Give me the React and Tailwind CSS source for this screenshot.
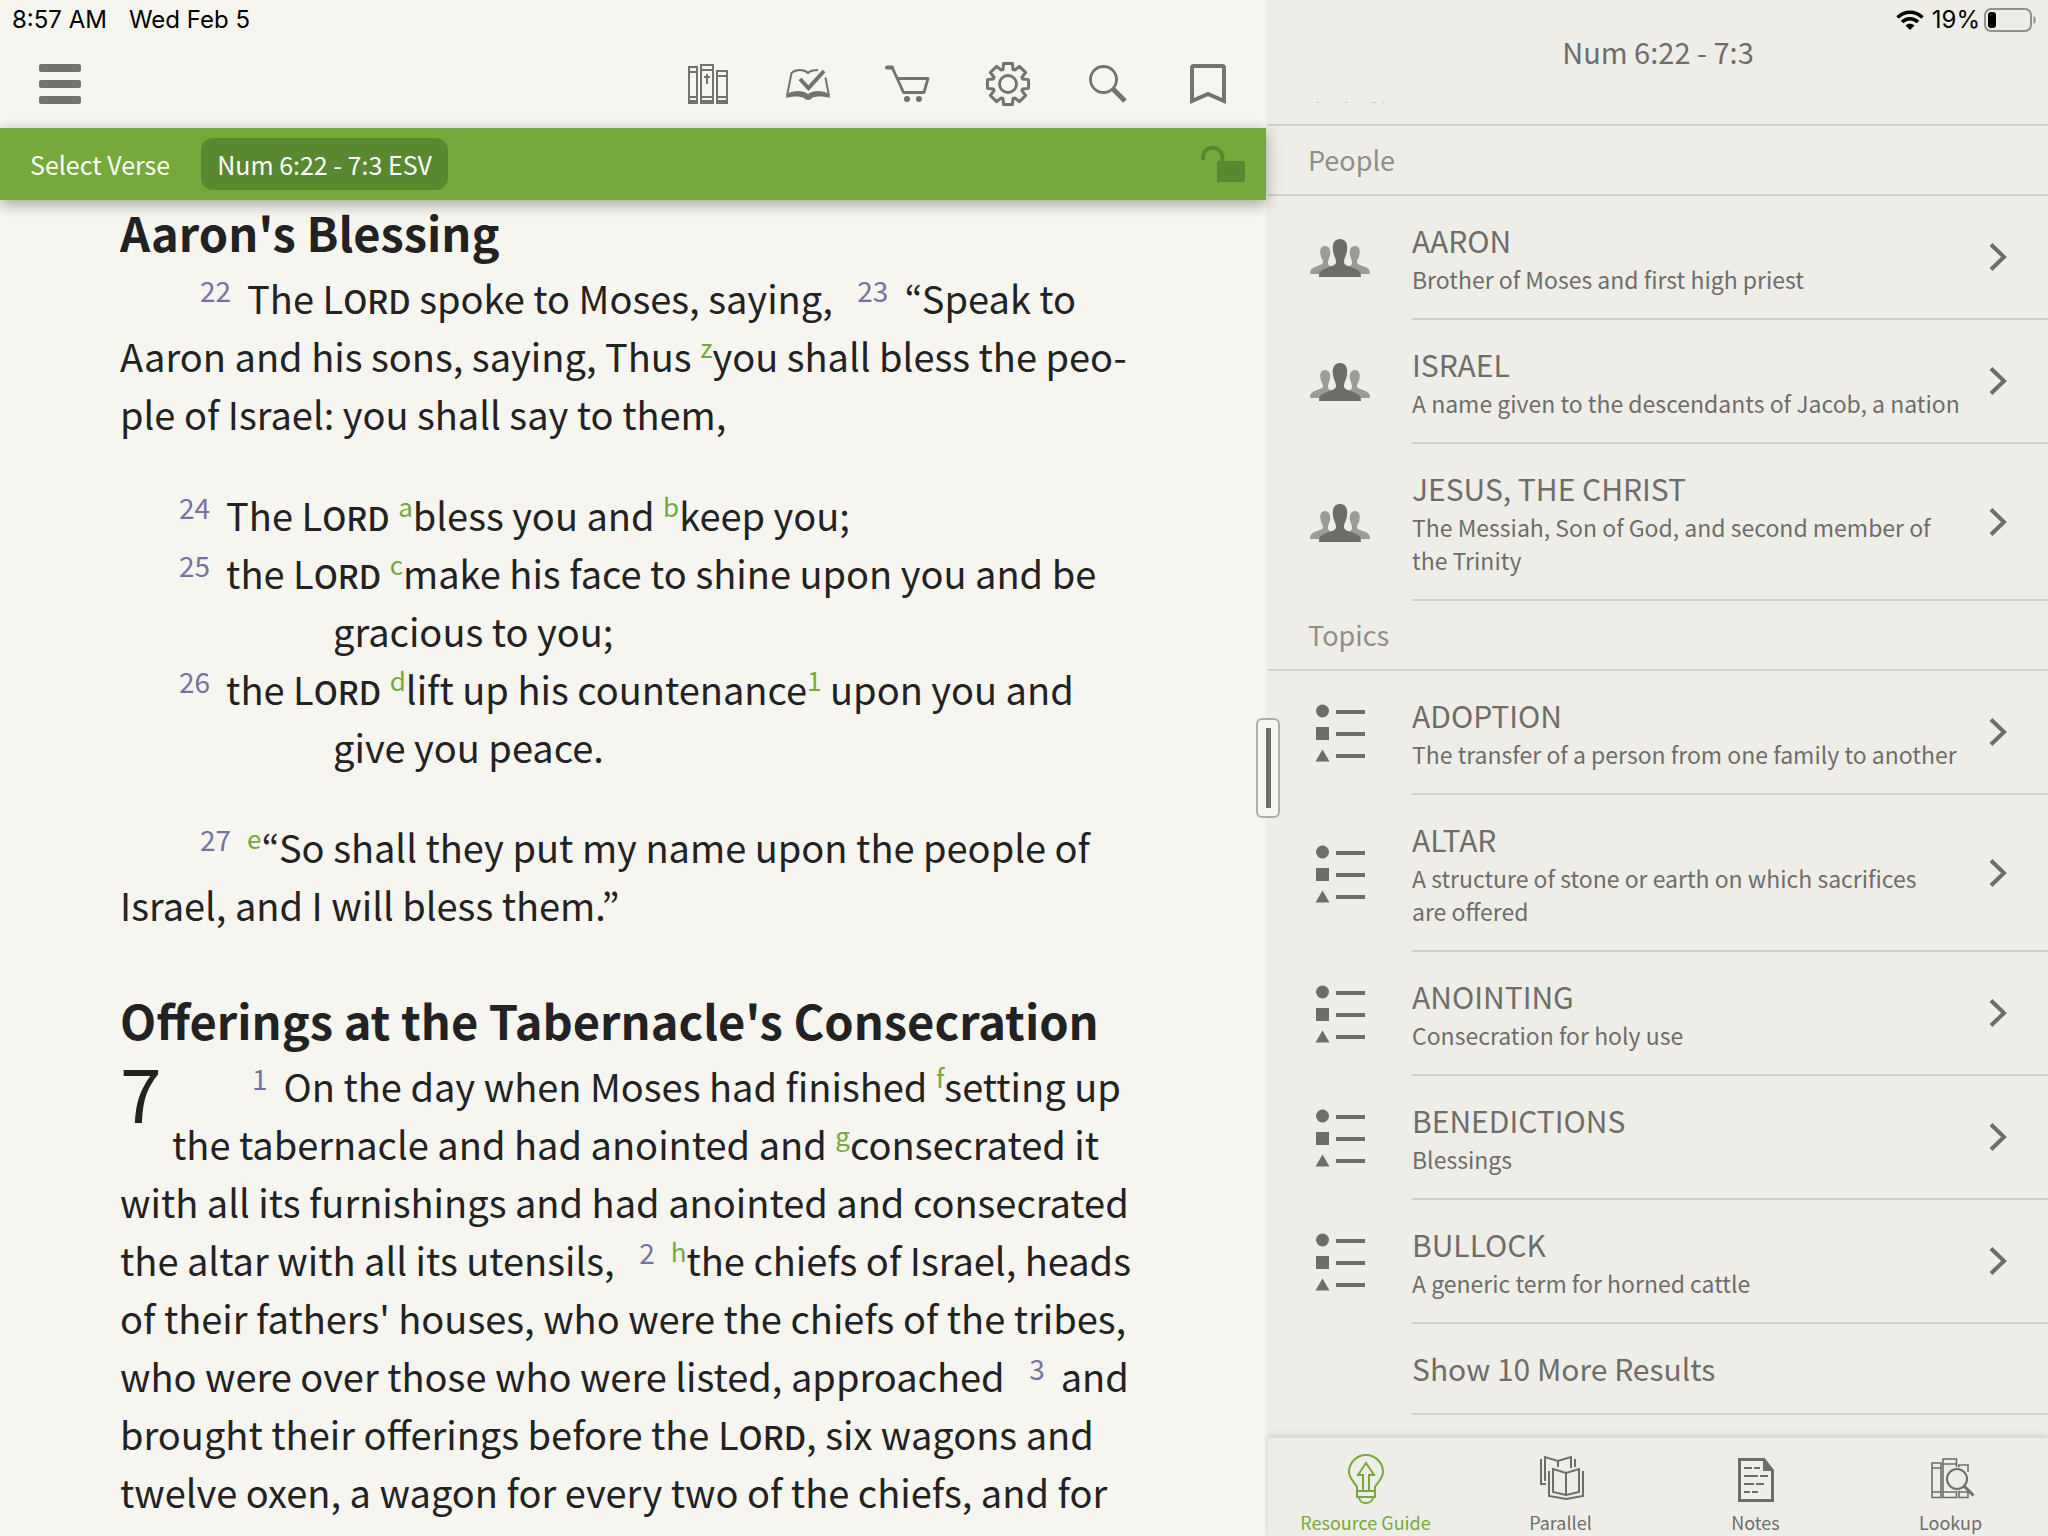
import { useState } from 'react';

const people = [
  { name: 'AARON', info: 'Brother of Moses and first high priest' },
  { name: 'ISRAEL', info: 'A name given to the descendants of Jacob, a nation' },
  { name: 'JESUS, THE CHRIST', info: 'The Messiah, Son of God, and second member of\nthe Trinity' },
];

const topics = [
  { name: 'ADOPTION', info: 'The transfer of a person from one family to another' },
  { name: 'ALTAR', info: 'A structure of stone or earth on which sacrifices\nare offered' },
  { name: 'ANOINTING', info: 'Consecration for holy use' },
  { name: 'BENEDICTIONS', info: 'Blessings' },
  { name: 'BULLOCK', info: 'A generic term for horned cattle' },
];

// Outline of the settings gear, eight teeth around (30, 30)
const gearPath = () => {
  const points = [];
  for (let i = 0; i < 8; i++) {
    [[-19, 15.5], [-12, 21], [12, 21], [19, 15.5]].forEach(([offset, r]) => {
      const a = ((i * 45 + offset) * Math.PI) / 180;
      points.push(`${(30 + r * Math.cos(a)).toFixed(2)} ${(30 + r * Math.sin(a)).toFixed(2)}`);
    });
  }
  return `M${points.join('L')}Z`;
};

function ToolIcon({ children }) {
  return (
    <svg viewBox="0 0 60 60" className="size-[60px]" fill="none" stroke="currentColor" strokeWidth="2" aria-hidden="true">
      {children}
    </svg>
  );
}

const tools = [
  {
    label: 'Library',
    icon: (
      <ToolIcon>
        <path d="M11 13h8v36h-8zM23 11h12v38H23zM39 17h10v32H39zM11 18h8M11 43h8M23 16h12M23 43h12M39 22h10M39 43h10" />
        <path d="M10 48h10M22 48h14M38 48h12" strokeWidth="4" />
        <path d="M29 20v10M26 23h6" />
      </ToolIcon>
    ),
  },
  {
    label: 'Reading plans',
    icon: (
      <ToolIcon>
        <path d="M9 42l4.5-23C18 15 26 15 30 19C33 16 36 16 40 16M47.5 23.5L51 42" />
        <path d="M8 44l1-4C15 36 25 36 30 40C35 36 45 36 51 40l1 4C45 42 37 42 34 44q-1 2-4 2t-4-2C22 42 15 42 8 44z" fill="currentColor" stroke="none" />
        <path d="M22 25l8.5 9L46 17" strokeWidth="4" />
      </ToolIcon>
    ),
  },
  {
    label: 'Store',
    icon: (
      <ToolIcon>
        <path d="M9 13.5h5" strokeWidth="4" strokeLinecap="round" />
        <path d="M14 13l11.5 25.5H46L50 24.5H20" strokeWidth="2.8" strokeLinejoin="round" />
        <circle cx="29" cy="45" r="3" fill="currentColor" stroke="none" />
        <circle cx="41" cy="45" r="3" fill="currentColor" stroke="none" />
      </ToolIcon>
    ),
  },
  {
    label: 'Settings',
    icon: (
      <ToolIcon>
        <path d={gearPath()} strokeWidth="3" strokeLinejoin="round" />
        <circle cx="30" cy="30" r="8.5" strokeWidth="2.8" />
      </ToolIcon>
    ),
  },
  {
    label: 'Search',
    icon: (
      <ToolIcon>
        <circle cx="25.5" cy="25.5" r="13" strokeWidth="2.8" />
        <path d="M34.5 34.5L47 47" strokeWidth="5" />
      </ToolIcon>
    ),
  },
  {
    label: 'Bookmark',
    icon: (
      <ToolIcon>
        <path d="M14 47V14a2 2 0 0 1 2-2h28a2 2 0 0 1 2 2v33l-16-7z" strokeWidth="4" />
      </ToolIcon>
    ),
  },
];

function TabIcon({ children }) {
  return (
    <svg viewBox="0 0 52 52" className="size-[52px]" fill="none" stroke="currentColor" strokeWidth="2" aria-hidden="true">
      {children}
    </svg>
  );
}

const tabs = [
  {
    label: 'Resource Guide',
    icon: (
      <TabIcon>
        <path d="M17 43V33C14 28 9 24 9 18a17 17 0 0 1 34 0C43 24 38 28 35 33V43zM17 37h18M19 43c0 8 14 8 14 0" />
        <path d="M23 37V21h-5l8-12 8 12h-5v16" />
      </TabIcon>
    ),
  },
  {
    label: 'Parallel',
    icon: (
      <TabIcon>
        <path d="M6 5v25h5M10 27V3l13 4 13-4v11M23 7v6M40 5v8" />
        <path d="M18 15l13 4 13-4v23l-13 3-13-3zM31 19v22M14 17v25l17 3 17-3V17" />
      </TabIcon>
    ),
  },
  {
    label: 'Notes',
    icon: (
      <TabIcon>
        <path d="M9.5 5.5H34l8.5 11v30h-33z" strokeWidth="3" />
        <path d="M33 4l11 13H33z" fill="currentColor" stroke="none" />
        <path d="M14 14h8M24 14h6M14 22h14M30 22h8M14 30h10M26 30h8M14 38h6M22 38h6" />
      </TabIcon>
    ),
  },
  {
    label: 'Lookup',
    icon: (
      <TabIcon>
        <path d="M7 9h9v34.5H7zM18 5h13.5v38.5H18zM34 11h9v32.5h-9zM7 14h9M7 38h9M18 10h13.5M18 38h13.5M34 38h9" strokeWidth="1.6" />
        <path d="M37 18h9v18h-9z" className="fill-[#efede8]" stroke="none" />
        <circle cx="32" cy="25" r="12" className="fill-[#efede8]" stroke="none" />
        <circle cx="32" cy="25" r="10" />
        <path d="M39.5 32.5l9 9" strokeWidth="3" />
      </TabIcon>
    ),
  },
];

const Lord = () => (
  <>
    L<span className="text-[32px] leading-0 font-medium">ORD</span>
  </>
);

function Verse({ n }) {
  return <span className="mx-4 text-[28px] leading-0 align-[12px] text-[#76729f]">{n}</span>;
}

function Note({ children }) {
  return (
    <a href="#note" className="text-[26px] leading-0 align-[14px] text-[#76a93c]">
      {children}
    </a>
  );
}

function PeopleIcon() {
  return (
    <svg viewBox="0 0 60 40" className="w-[60px] h-10" aria-hidden="true">
      <g className="fill-[#9c9b96]">
        <path d="M15 8c4 0 6 4 5 9c-1 4-2 5-2 8c0 3 3 3 9 6v5H0c0-5 2-6 6-7.5c5-2 7-2 7-5c0-2-2-3-2.5-7C9.5 12 11 8 15 8z" />
        <path d="M45 8c-4 0-6 4-5 9c1 4 2 5 2 8c0 3-3 3-9 6v5h27c0-5-2-6-6-7.5c-5-2-7-2-7-5c0-2 2-3 2.5-7C50.5 12 49 8 45 8z" />
      </g>
      <path
        className="fill-[#6e6d69]"
        d="M30 1c6 0 8 5 7 12c-1 6-3 7-3 11c0 3 3 3.500 8 5.500c7 2.500 9 4 9 9.500H9c0-5.500 2-7 9-9.500c5-2 8-2.500 8-5.500c0-4-2-5-3-11c-1-7 1-12 7-12z"
      />
    </svg>
  );
}

function TopicIcon() {
  return (
    <svg viewBox="0 0 50 58" className="w-[50px] h-[58px] fill-[#6e6d69]" aria-hidden="true">
      <circle cx="7.5" cy="7" r="6.5" />
      <path d="M1 23h13v13H1zM7.5 45.5l7 12h-14zM21 6h29v4H21zM21 28h29v4H21zM21 50h29v4H21z" />
    </svg>
  );
}

function Section({ title, items, icon }) {
  return (
    <section>
      <h2 className="pl-10 text-[27px] leading-[68px] text-[#8f8e8a] border-b-2 border-[#d1d0cb]">{title}</h2>
      <ul>
        {items.map((item) => (
          <li key={item.name}>
            <a href="#entry" className="flex">
              <span className="w-36 shrink-0 flex items-center justify-center">{icon}</span>
              <span className="flex-1 flex items-center justify-between pr-[41px] border-b-2 border-[#d1d0cb]">
                <span className="pt-6 pb-[22px]">
                  <span className="block text-[30px] leading-10">{item.name}</span>
                  <span className="block mt-[3px] text-[23px] leading-[33px] whitespace-pre-line">{item.info}</span>
                </span>
                <svg viewBox="0 0 18 28" className="w-[18px] h-7 shrink-0" fill="none" stroke="currentColor" strokeWidth="4" aria-hidden="true">
                  <path d="M2 1.500L15 14L2 26.500" />
                </svg>
              </span>
            </a>
          </li>
        ))}
      </ul>
    </section>
  );
}

function Reader() {
  return (
    <main className="flex flex-col min-w-0 min-h-0 bg-[#f7f5f0]">
      <div className="flex gap-[22px] h-8 pt-2 pl-3 font-[Inter,sans-serif] text-2xl leading-6 text-black">
        <span>8:57 AM</span>
        <span>Wed Feb 5</span>
      </div>
      <header className="flex items-center justify-between h-[88px] mt-2 pl-[39px] pr-2 text-[#73726d]">
        <button aria-label="Menu" className="flex flex-col gap-2">
          <span className="w-[42px] h-2 rounded-xs bg-current" />
          <span className="w-[42px] h-2 rounded-xs bg-current" />
          <span className="w-[42px] h-2 rounded-xs bg-current" />
        </button>
        <nav className="flex">
          {tools.map((tool) => (
            <button key={tool.label} aria-label={tool.label} className="w-[100px] flex justify-center">
              {tool.icon}
            </button>
          ))}
        </nav>
      </header>
      <div className="relative z-10 flex items-center h-[72px] shrink-0 pl-[30px] pr-[21px] bg-[#76a93c] text-white text-[25px] leading-9 shadow-[0_4px_14px_rgba(0,0,0,0.35)]">
        <button>Select Verse</button>
        <button className="ml-[31px] px-4 py-2 rounded-xl bg-[#588830]">Num 6:22 - 7:3 ESV</button>
        <button aria-label="Unlock" className="ml-auto text-[#588830]">
          <svg viewBox="0 0 44 36" className="w-11 h-9" aria-hidden="true">
            <path d="M2 14v-2.500a9.700 9.700 0 0 1 19.400 0V16" fill="none" stroke="currentColor" strokeWidth="4" />
            <rect x="16" y="15" width="28" height="21" rx="1.5" fill="currentColor" />
          </svg>
        </button>
      </div>

      <article className="flex-1 min-h-0 overflow-hidden px-[120px] text-[38px] leading-[58px] text-[#222]">
        <h1 className="mb-[5px] text-[47px] leading-[64px] font-bold">Aaron's Blessing</h1>
        <p className="indent-16">
          <Verse n="22" />The <Lord /> spoke to Moses, saying, <Verse n="23" />“Speak to Aaron and his sons, saying, Thus{' '}
          <Note>z</Note>you shall bless the peo-<br />ple of Israel: you shall say to them,
        </p>
        <div className="mt-[43px] mb-[42px] pl-[43px]">
          <p><Verse n="24" />The <Lord /> <Note>a</Note>bless you and <Note>b</Note>keep you;</p>
          <p><Verse n="25" />the <Lord /> <Note>c</Note>make his face to shine upon you and be</p>
          <p className="pl-[170px]">gracious to you;</p>
          <p><Verse n="26" />the <Lord /> <Note>d</Note>lift up his countenance<Note>1</Note> upon you and</p>
          <p className="pl-[170px]">give you peace.</p>
        </div>
        <p className="indent-16">
          <Verse n="27" /><Note>e</Note>“So shall they put my name upon the people of Israel, and I will bless them.”
        </p>
        <h1 className="mt-[54px] mb-[5px] text-[47px] leading-[64px] font-bold">Offerings at the Tabernacle's Consecration</h1>
        <p className="indent-16">
          <span className="float-left indent-0 w-[52px] h-[116px] text-[75px] leading-[68px]">7</span>
          <Verse n="1" />On the day when Moses had finished <Note>f</Note>setting up the tabernacle and had anointed and{' '}
          <Note>g</Note>consecrated it with all its furnishings and had anointed and consecrated the altar with all its
          utensils, <Verse n="2" /><Note>h</Note>the chiefs of Israel, heads of their fathers' houses, who were the
          chiefs of the tribes, who were over those who were listed, approached <Verse n="3" />and brought their
          offerings before the <Lord />, six wagons and twelve oxen, a wagon for every two of the chiefs, and for
        </p>
      </article>
    </main>
  );
}

function ResourcePane() {
  const [active, setActive] = useState('Resource Guide');

  return (
    <aside className="relative flex flex-col min-w-0 min-h-0 bg-[#efede8] border-l-2 border-[#f1efea] text-[#6e6d69]">
      <div className="flex items-center justify-end h-8 pt-2 pr-[11px] font-[Inter,sans-serif] text-2xl leading-6 text-black">
        <svg viewBox="0 0 28 20" className="w-7 h-5 mr-2" fill="none" stroke="currentColor" strokeWidth="3.5" aria-hidden="true">
          <path d="M1.500 7.500C8.500 0.500 19.500 0.500 26.500 7.500M6 12C10.500 7.500 17.500 7.500 22 12" />
          <path d="M14 20l-4.500-4.500c2.500-2.500 6.500-2.500 9 0z" fill="currentColor" stroke="none" />
        </svg>
        <span>19%</span>
        <svg viewBox="0 0 53 24" className="w-[53px] h-6 ml-1" aria-hidden="true">
          <rect x="1" y="1" width="46" height="22" rx="6" fill="none" stroke="#91908c" strokeWidth="2" />
          <rect x="4" y="4" width="8" height="16" rx="3" />
          <path d="M49.500 8c3 1 3 7 0 8z" fill="#91908c" />
        </svg>
      </div>
      <h1 className="text-center text-[29px] leading-[38px]">Num 6:22 - 7:3</h1>
      <div className="flex-1 min-h-0 overflow-hidden">
        <div className="h-14 pt-8 pl-12 border-b-2 border-[#d1d0cb]">
          <svg viewBox="0 0 72 1" className="w-[72px] h-px fill-[#c9c8c3]" aria-hidden="true">
            <path d="M0 0h3v1H0zM29 0h3v1h-3zM56 0h4v1h-4zM66 0h3v1h-3z" />
          </svg>
        </div>
        <Section title="People" items={people} icon={<PeopleIcon />} />
        <Section title="Topics" items={topics} icon={<TopicIcon />} />
        <button className="block w-[calc(100%-144px)] ml-36 text-left text-[30px] leading-[89px] border-b-2 border-[#d1d0cb]">
          Show 10 More Results
        </button>
      </div>
      <nav className="grid grid-cols-4 h-[98px] pt-4 shadow-[0_-2px_6px_rgba(0,0,0,0.15)]">
        {tabs.map((tab) => (
          <button
            key={tab.label}
            onClick={() => setActive(tab.label)}
            className={`flex flex-col items-center gap-1 text-lg leading-6 ${active === tab.label ? 'text-[#76a93c]' : ''}`}
          >
            {tab.icon}
            {tab.label}
          </button>
        ))}
      </nav>
      <button
        aria-label="Resize panes"
        className="absolute z-20 left-0 top-1/2 -translate-x-1/2 -translate-y-1/2 flex justify-center w-6 h-[100px] py-2 bg-[#f7f5f0] border-2 border-[#aeada8] rounded-md"
      >
        <span className="w-[5px] h-full bg-[#6e6d69]" />
      </button>
    </aside>
  );
}

export default function App() {
  return (
    <div className="grid grid-cols-[1266fr_782fr] grid-rows-[100%] h-screen overflow-hidden font-['Noto_Sans_CJK_KR','Noto_Sans',sans-serif]">
      <Reader />
      <ResourcePane />
    </div>
  );
}
